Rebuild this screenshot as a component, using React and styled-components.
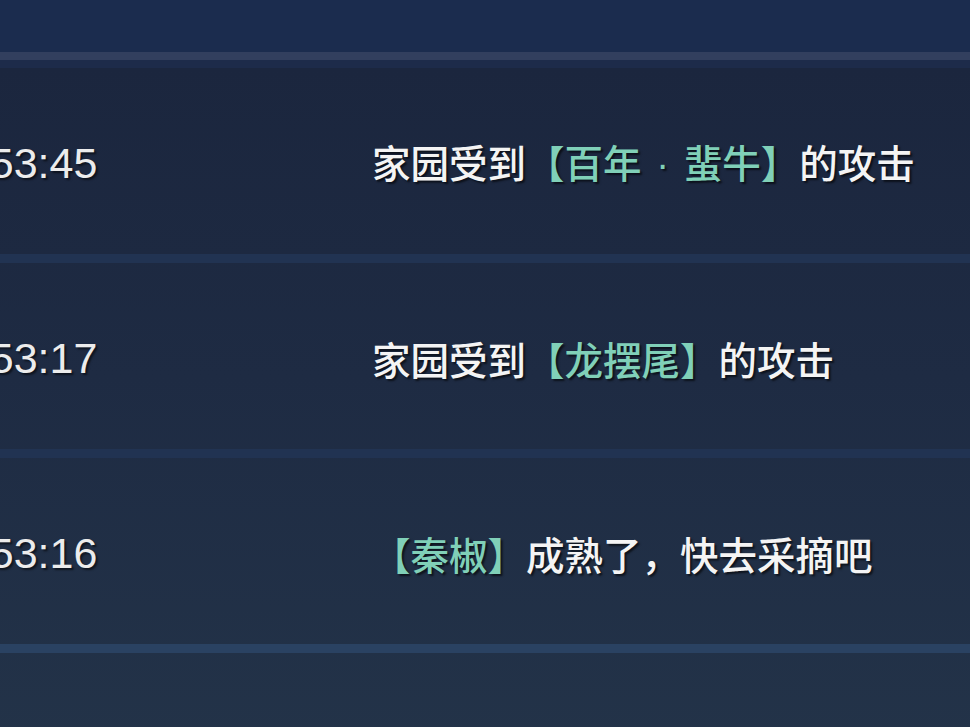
import React from 'react'
import styled, { createGlobalStyle } from 'styled-components'

const GlobalStyle = createGlobalStyle`
  html, body {
    margin: 0;
    padding: 0;
    background-color: #1b263e;
    overflow: hidden;
  }
`

const Page = styled.div`
  width: 970px;
  height: 727px;
  overflow: hidden;
  display: flex;
  flex-direction: column;
  font-family: "Noto Sans CJK SC", "Noto Sans", sans-serif;
`

const Header = styled.div`
  height: 52px;
  flex-shrink: 0;
  background-color: #1b2c4e;
`

const HeaderEdge = styled.div`
  height: 8px;
  flex-shrink: 0;
  background-color: #323f5e;
  border-bottom: 8px solid #1d2b4a;
`

const List = styled.div`
  flex: 1;
  display: flex;
  flex-direction: column;
  background: linear-gradient(180deg, #1b263e 0%, #1e2b43 40%, #24354a 100%);
`

const Row = styled.div`
  height: 186px;
  flex-shrink: 0;
  display: grid;
  grid-template-columns: 372px 1fr;
  align-items: center;
`

const Divider = styled.div`
  height: 9px;
  flex-shrink: 0;
  background-color: ${p => (p.$light ? '#2a4262' : '#213352')};
`

const Time = styled.div`
  margin-left: -70px;
  margin-top: 4px;
  font-family: "Liberation Sans", Arial, sans-serif;
  font-size: 43px;
  color: #ececec;
  white-space: nowrap;
  text-shadow: 2px 2px 2px rgba(0, 0, 0, 0.55);
`

const Message = styled.div`
  margin-top: 4px;
  font-size: 38.5px;
  font-weight: 500;
  line-height: 1;
  color: #f4f4f4;
  white-space: nowrap;
  text-shadow: 2px 2px 2px rgba(0, 0, 0, 0.6);
`

const Name = styled.span`
  color: #80d0b8;
`

const Dot = styled.span`
  font-family: "Liberation Sans", Arial, sans-serif;
  white-space: pre;
  padding: 0 4px;
`

const events = [
  { time: '10:53:45', before: '家园受到', name: ['百年', '蜚牛'], after: '的攻击' },
  { time: '10:53:17', before: '家园受到', name: ['龙摆尾'], after: '的攻击' },
  { time: '10:53:16', before: '', name: ['秦椒'], after: '成熟了，快去采摘吧' },
]

function App() {
  return (
    <Page>
      <GlobalStyle />
      <Header />
      <HeaderEdge />
      <List>
        {events.map((ev, i) => (
          <React.Fragment key={ev.time}>
            <Row>
              <Time>{ev.time}</Time>
              <Message>
                {ev.before}
                <Name>
                  【
                  {ev.name.map((n, j) => (
                    <React.Fragment key={n}>
                      {j > 0 && <Dot>{' · '}</Dot>}
                      {n}
                    </React.Fragment>
                  ))}
                  】
                </Name>
                {ev.after}
              </Message>
            </Row>
            <Divider $light={i === events.length - 1} />
          </React.Fragment>
        ))}
        <Row />
      </List>
    </Page>
  )
}

export default App
